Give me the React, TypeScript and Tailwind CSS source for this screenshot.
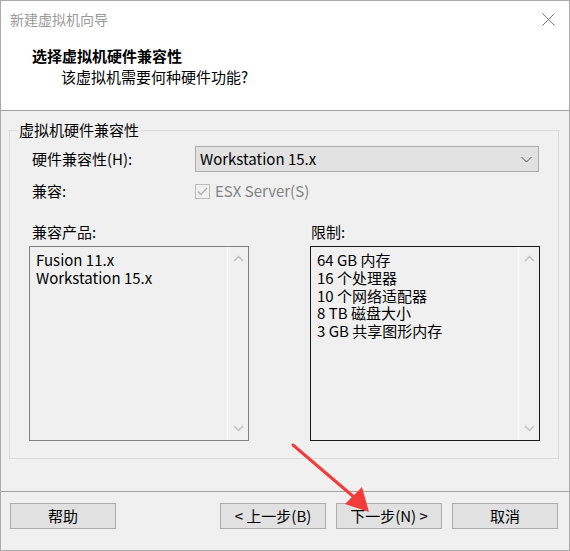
import React from 'react';

const FONT = { fontFamily: '"Segoe UI", "Noto Sans CJK SC", "Noto Sans", sans-serif' };

const products = ['Fusion 11.x', 'Workstation 15.x'];
const limits = ['64 GB 内存', '16 个处理器', '10 个网络适配器', '8 TB 磁盘大小', '3 GB 共享图形内存'];

const ListBox = ({ items, dark }: { items: string[]; dark?: boolean }) => (
  <div
    className={`flex h-[195px] border ${dark ? 'border-[#1a1a1a]' : 'border-[#828282]'} bg-[#f0f0f0]`}
  >
    <div className="flex-1 pl-[6px] pt-[4px] text-[15px] leading-[17.75px] text-black">
      {items.map((t) => (
        <div key={t}>{t}</div>
      ))}
    </div>
    {/* scrollbar */}
    <div className="flex w-[21px] flex-col items-center justify-between border-l border-white py-[8px]">
      <svg width="11" height="7" viewBox="0 0 11 7">
        <path d="M1 6 L5.5 1.5 L10 6" fill="none" stroke="#c2c2c2" strokeWidth="1.5" />
      </svg>
      <svg width="11" height="7" viewBox="0 0 11 7">
        <path d="M1 1 L5.5 5.5 L10 1" fill="none" stroke="#c2c2c2" strokeWidth="1.5" />
      </svg>
    </div>
  </div>
);

const Btn = ({ children, className = '' }: { children: React.ReactNode; className?: string }) => (
  <button
    className={`flex h-[26px] w-[106px] items-center justify-center border border-[#adadad] bg-[#e1e1e1] text-[15px] text-black ${className}`}
  >
    {children}
  </button>
);

export default function App() {
  return (
    <div style={FONT} className="relative flex h-[551px] w-[570px] flex-col overflow-hidden border border-[#aaaaaa] bg-[#f0f0f0]">
      {/* header */}
      <div className="h-[109px] border-b border-[#a0a0a0] bg-white box-content">
        <div className="flex h-[36px] items-center justify-between pl-[9px] pr-[14px]">
          <span className="text-[14px] text-[#999999]">新建虚拟机向导</span>
          <svg width="13" height="13" viewBox="0 0 13 13">
            <path d="M0.5 0.5 L12.5 12.5 M12.5 0.5 L0.5 12.5" stroke="#7a7a7a" strokeWidth="1" />
          </svg>
        </div>
        <div className="pl-[31px] pt-[9px] text-[15px] font-bold leading-[20px] text-black">选择虚拟机硬件兼容性</div>
        <div className="pl-[60px] pt-[1px] text-[15px] leading-[20px] text-black">该虚拟机需要何种硬件功能?</div>
      </div>

      {/* body */}
      <div className="flex-1 pl-[8px] pr-[10px] pt-[9px]">
        <fieldset className="border border-[#dcdcdc] pb-[17px]">
          <legend className="ml-[7px] px-[2px] text-[15px] leading-[20px] text-black">虚拟机硬件兼容性</legend>

          <div className="pl-[19px] pr-[18px]">
            <div className="mt-[6px] flex h-[26px] items-center">
              <span className="w-[166px] pl-[3px] text-[15px] text-black">硬件兼容性(H):</span>
              <div className="mr-[1px] flex h-[26px] flex-1 items-center justify-between border border-[#adadad] bg-[#e1e1e1] pl-[4px] pr-[6px]">
                <span className="text-[15px] text-black">Workstation 15.x</span>
                <svg width="11" height="7" viewBox="0 0 11 7">
                  <path d="M0.5 1 L5.5 6 L10.5 1" fill="none" stroke="#555555" strokeWidth="1" />
                </svg>
              </div>
            </div>

            <div className="mt-[9px] flex h-[20px] items-center">
              <span className="w-[166px] pl-[3px] text-[15px] text-black">兼容:</span>
              <div className="flex items-center gap-[5px]">
                <span className="flex h-[15px] w-[15px] items-center justify-center border border-[#bcbcbc] bg-[#f0f0f0]">
                  <svg width="11" height="9" viewBox="0 0 11 9">
                    <path d="M1 4.5 L4 7.5 L10 1" fill="none" stroke="#b0b0b0" strokeWidth="1.4" />
                  </svg>
                </span>
                <span className="text-[15px] text-[#838383]">ESX Server(S)</span>
              </div>
            </div>

            <div className="mt-[22px] flex justify-between">
              <div className="w-[220px]">
                <div className="h-[18px] pl-[3px] text-[15px] leading-[18px] text-black">兼容产品:</div>
                <div className="mt-[5px]">
                  <ListBox items={products} />
                </div>
              </div>
              <div className="w-[230px]">
                <div className="h-[18px] pl-[1px] text-[15px] leading-[18px] text-black">限制:</div>
                <div className="mt-[5px]">
                  <ListBox items={limits} dark />
                </div>
              </div>
            </div>
          </div>
        </fieldset>
      </div>

      {/* footer */}
      <div className="flex h-[47px] items-start border-t border-[#a0a0a0] pl-[9px] pt-[11px] box-content">
        <Btn>帮助</Btn>
        <div className="ml-[104px] flex gap-[10px]">
          <Btn>&lt; 上一步(B)</Btn>
          <Btn>下一步(N) &gt;</Btn>
          <Btn>取消</Btn>
        </div>
      </div>

      {/* annotation arrow */}
      <svg className="pointer-events-none absolute left-0 top-0" width="570" height="551" viewBox="0 0 570 551">
        <path d="M292 444 L354 497" stroke="#f23c3c" strokeWidth="3" strokeLinecap="round" />
        <polygon points="368,511 344,503 361,486" fill="#f23c3c" />
      </svg>
    </div>
  );
}
